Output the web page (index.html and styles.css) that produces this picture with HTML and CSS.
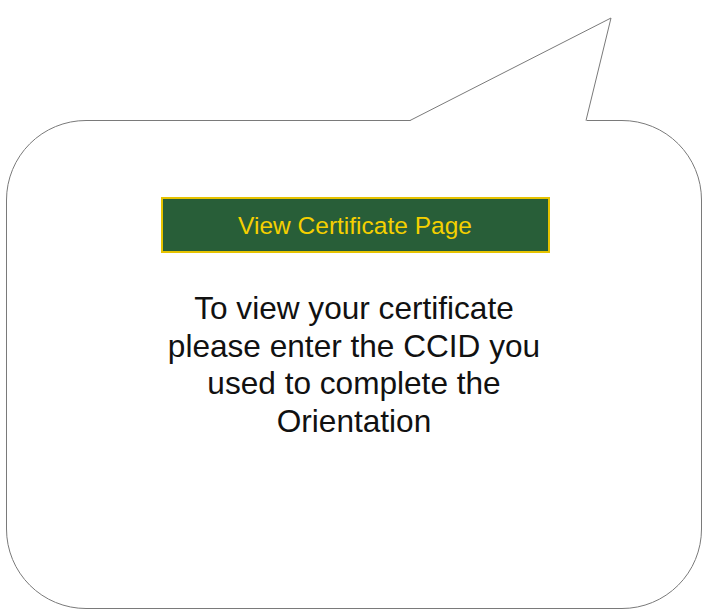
FILE: index.html
```html
<!DOCTYPE html>
<html lang="en">
<head>
<meta charset="utf-8">
<title>View Certificate Page</title>
<link rel="stylesheet" href="styles.css">
</head>
<body>
<div class="stage">
  <div class="bubble">
    <svg class="tail" viewBox="400 0 220 124" width="220" height="124" aria-hidden="true">
      <polygon points="411,122 611,18 585,122" fill="#ffffff"/>
      <rect x="410.5" y="119" width="176" height="3" fill="#ffffff"/>
      <polyline points="410,120.5 611,18 586,120.5" fill="none" stroke="#7a7a7a" stroke-width="1"/>
    </svg>
    <a class="cert-btn" href="#">View Certificate Page</a>
    <p class="message">To view your certificate<br>please enter the CCID you<br>used to complete the<br>Orientation</p>
  </div>
</div>
</body>
</html>
```

FILE: styles.css
```css
html, body {
  margin: 0;
  padding: 0;
  background: #ffffff;
}

body {
  font-family: "Liberation Sans", Arial, sans-serif;
}

.stage {
  padding: 120px 0 0 6px;
}

.bubble {
  position: relative;
  box-sizing: border-box;
  width: 696px;
  height: 489px;
  border: 1px solid #7a7a7a;
  border-radius: 80px;
  background: #ffffff;
  display: flex;
  flex-direction: column;
  align-items: center;
  padding-top: 76px;
}

.tail {
  position: absolute;
  left: 393px;
  top: -121px;
  display: block;
}

.cert-btn {
  box-sizing: border-box;
  width: 389px;
  height: 56px;
  display: flex;
  align-items: center;
  justify-content: center;
  padding-top: 2px;
  background: #285e38;
  border: 2px solid #e6c300;
  color: #f5d000;
  font-size: 24.5px;
  text-decoration: none;
  margin-left: 2px;
}

.message {
  margin: 37px 0 0;
  font-size: 31.6px;
  line-height: 37.5px;
  text-align: center;
  color: #111111;
}
```
